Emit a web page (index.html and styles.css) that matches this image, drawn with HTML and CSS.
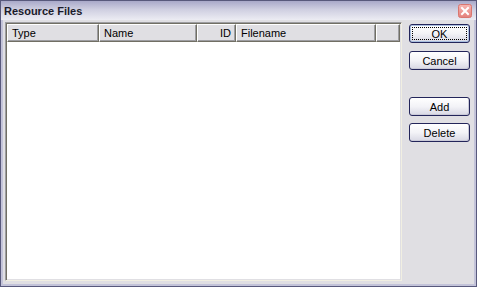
FILE: index.html
```html
<!DOCTYPE html>
<html lang="en">
<head>
    <meta charset="UTF-8">
    <title>Resource Files</title>
    <link rel="stylesheet" href="styles.css">
</head>
<body>
    <div class="window">
        <div class="titlebar">
            <span class="title">Resource Files</span>
            <span class="close">
                <svg width="14" height="14" viewBox="0 0 14 14">
                    <defs>
                        <linearGradient id="closeFill" x1="0" y1="0" x2="0" y2="1">
                            <stop offset="0" stop-color="#f6b6b2"/>
                            <stop offset="1" stop-color="#e4807c"/>
                        </linearGradient>
                    </defs>
                    <rect x="0.5" y="0.5" width="13" height="13" rx="2" fill="url(#closeFill)" stroke="#d9766f"/>
                    <path d="M4 4 L10 10 M10 4 L4 10" stroke="#ffffff" stroke-width="2" stroke-linecap="square"/>
                </svg>
            </span>
        </div>
        <div class="client">
            <div class="listview">
                <div class="header">
                    <div class="col col-type">Type</div>
                    <div class="col col-name">Name</div>
                    <div class="col col-id">ID</div>
                    <div class="col col-file">Filename</div>
                    <div class="col col-rest"></div>
                </div>
                <div class="rows"></div>
            </div>
            <div class="buttons">
                <button class="btn default">OK</button>
                <button class="btn">Cancel</button>
                <button class="btn add">Add</button>
                <button class="btn">Delete</button>
            </div>
        </div>
    </div>
</body>
</html>
```

FILE: styles.css
```css
body {
    margin: 0;
    font-family: "Liberation Sans", Arial, sans-serif;
    font-size: 11px;
    color: #000000;
}
.window {
    width: 477px;
    height: 287px;
    box-sizing: border-box;
    border: 1px solid #58597c;
    background-color: #c3c3d9;
    display: flex;
    flex-direction: column;
}
.titlebar {
    height: 19px;
    flex: none;
    display: flex;
    align-items: center;
    justify-content: space-between;
    padding: 0 4px 0 3px;
    background: linear-gradient(to bottom, #a9a9c9 0%, #cfcfe1 45%, #ececf3 100%);
}
.title {
    font-weight: bold;
    font-size: 11px;
    color: #1a1a2a;
}
.close {
    display: flex;
}
.client {
    flex: 1;
    margin: 0 2px 2px 2px;
    padding: 2px 4px 3px 2px;
    background-color: #e0dfe3;
    display: flex;
    gap: 7px;
}
.listview {
    width: 397px;
    box-sizing: border-box;
    border-top: 1px solid #9d9da1;
    border-left: 1px solid #9d9da1;
    border-right: 1px solid #f1efe2;
    border-bottom: 1px solid #f1efe2;
    box-shadow: inset 1px 1px #716f64, inset -1px -1px #e0dfe3;
    padding: 1px;
    background-color: #ffffff;
    display: flex;
    flex-direction: column;
}
.header {
    display: flex;
    height: 18px;
    flex: none;
    background-color: #e0dfe3;
}
.col {
    box-sizing: border-box;
    border-top: 1px solid #ffffff;
    border-left: 1px solid #ffffff;
    border-right: 1px solid #716f64;
    border-bottom: 1px solid #716f64;
    box-shadow: inset -1px -1px #9d9da1;
    padding: 2px 4px 0 4px;
    line-height: 13px;
    white-space: nowrap;
}
.col-type {
    width: 92px;
}
.col-name {
    width: 98px;
}
.col-id {
    width: 39px;
    text-align: right;
}
.col-file {
    width: 140px;
}
.col-rest {
    flex: 1;
}
.rows {
    flex: 1;
}
.buttons {
    width: 61px;
    padding-top: 2px;
    display: flex;
    flex-direction: column;
}
.btn {
    height: 19px;
    width: 61px;
    margin-bottom: 8px;
    padding: 0;
    font-family: "Liberation Sans", Arial, sans-serif;
    font-size: 11px;
    color: #000000;
    border: 1px solid #23255a;
    border-radius: 3px;
    background: linear-gradient(to bottom, #ffffff 0%, #f3f3f7 50%, #d8d8e4 100%);
    box-shadow: inset -1px -1px #cacad8;
}
.btn.default {
    box-shadow: inset 0 0 0 1px #a9bfe0;
    outline: 1px dotted #000000;
    outline-offset: -4px;
}
.btn.add {
    margin-top: 19px;
    margin-bottom: 7px;
}
```
